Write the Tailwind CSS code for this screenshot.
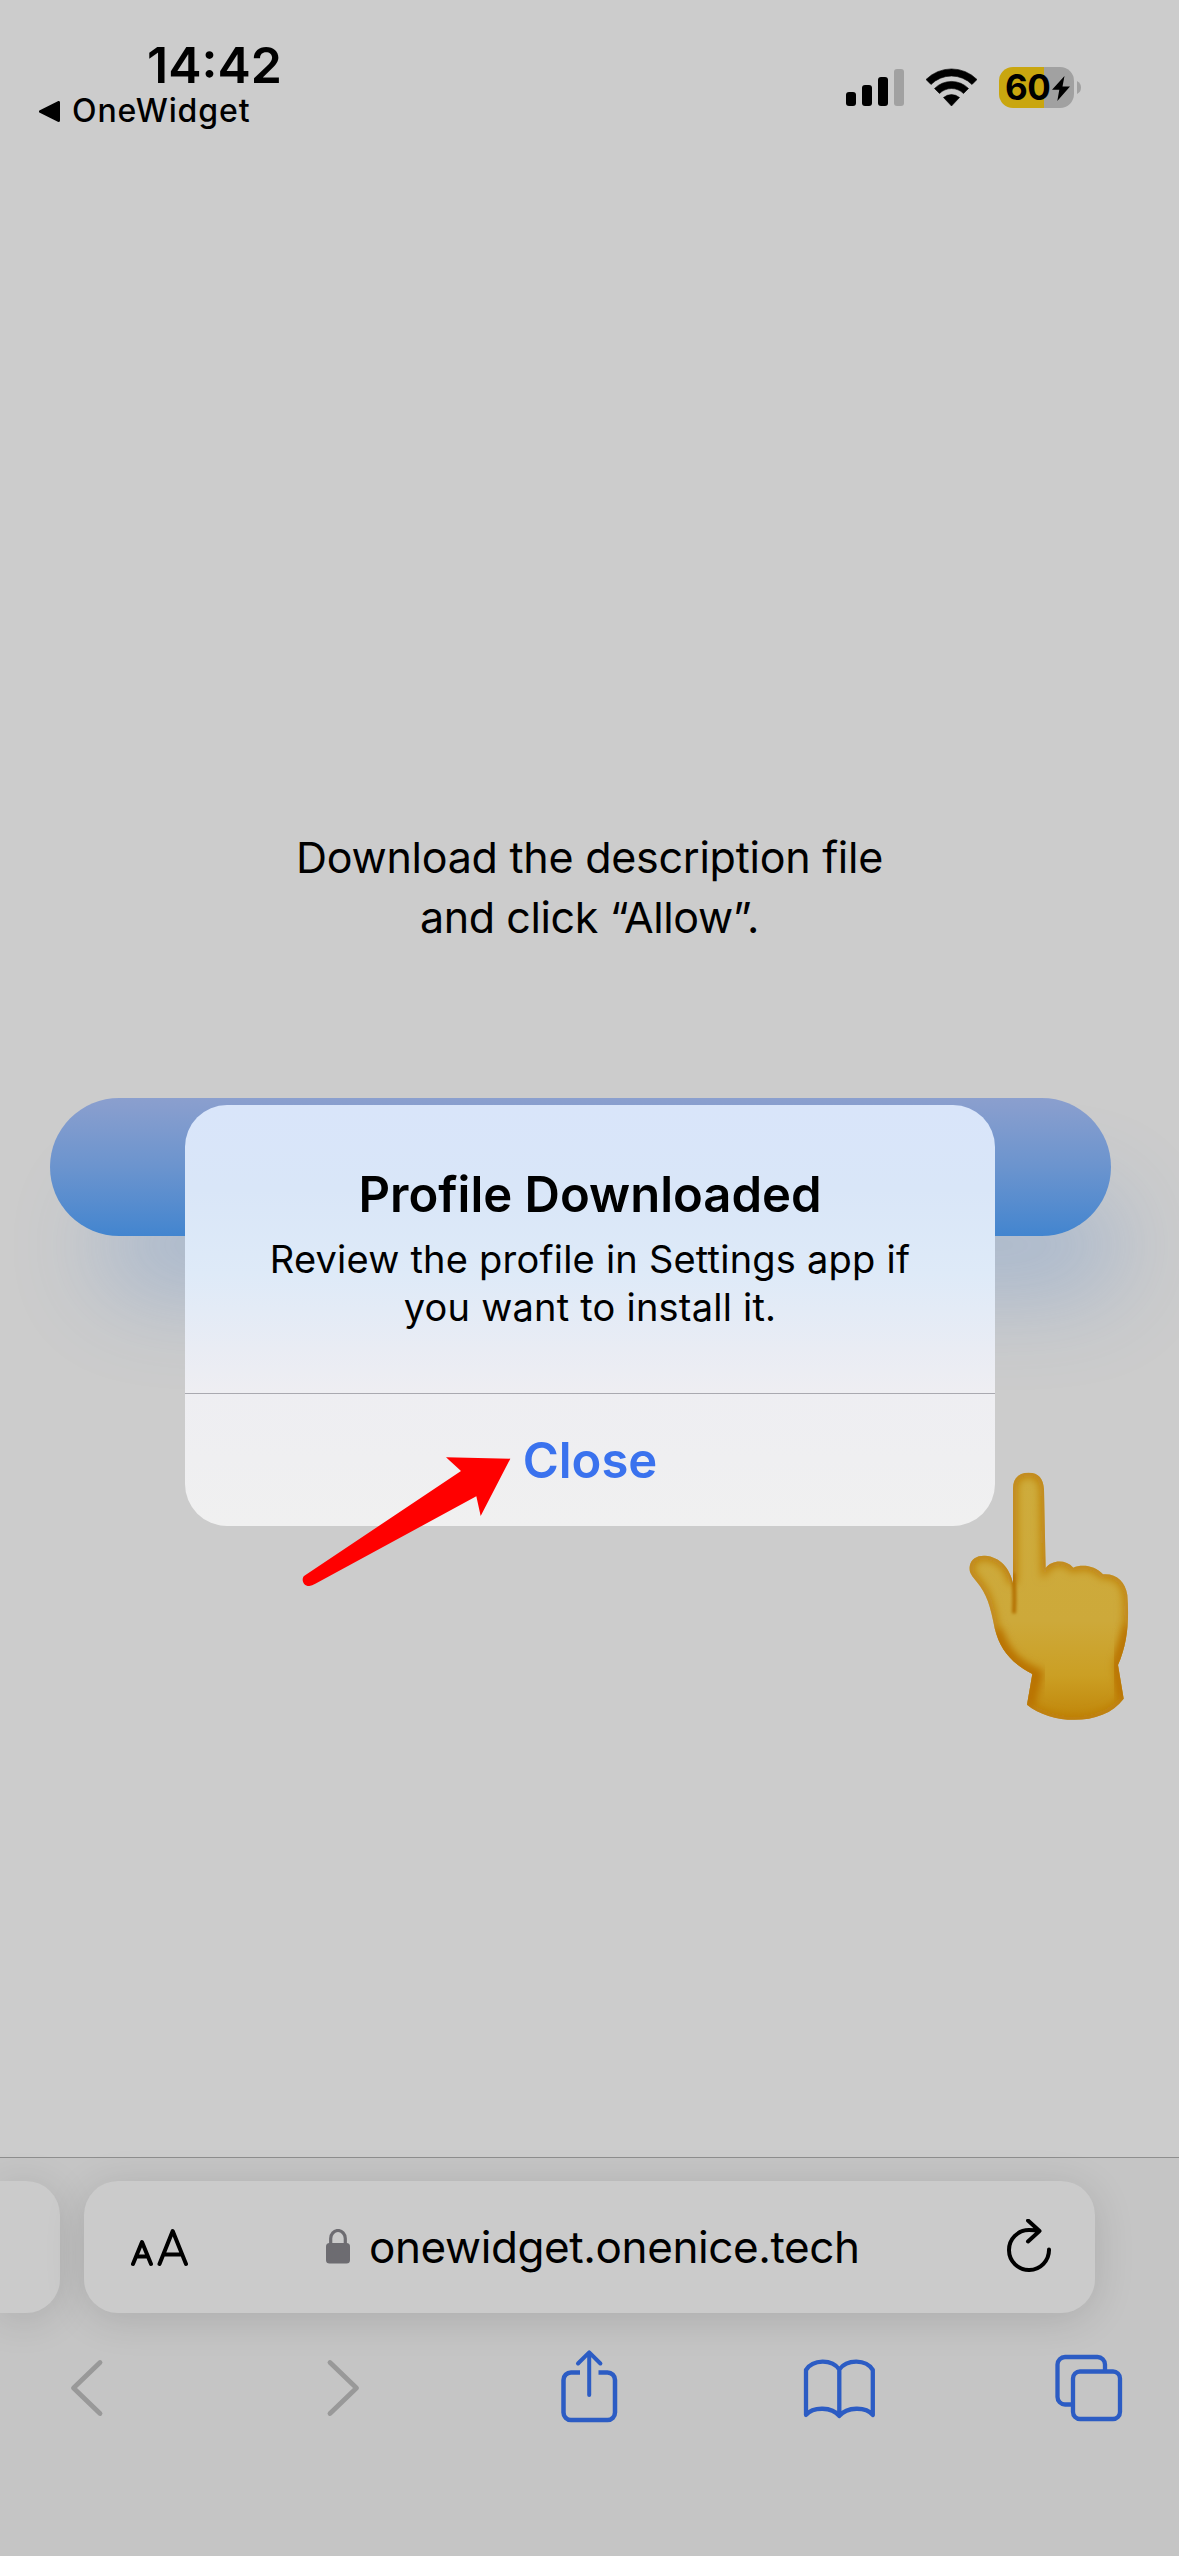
<!DOCTYPE html>
<html lang="en">
<head>
<meta charset="utf-8">
<title>Profile Downloaded</title>
<script src="https://cdn.jsdelivr.net/npm/@tailwindcss/browser@4"></script>
</head>
<body class="bg-[#cccccc] text-black font-['Inter',sans-serif]">
<div class="relative flex h-[2556px] w-[1179px] flex-col overflow-hidden">

  <!-- status bar -->
  <header class="flex h-[140px] items-start justify-between pl-[39px] pr-[98px]">
    <div class="flex flex-col pt-[35px]">
      <div class="pl-[108px] text-[50px] leading-[60px] font-semibold whitespace-nowrap">14:42</div>
      <div class="flex items-center gap-[12px] text-[32px] leading-[32px] font-medium tracking-[0.9px]">
        <svg class="h-[21px] w-[21px]" viewBox="0 0 21 21"><path d="M1.500 10.500 19.500 1.500v18z" fill="#000" stroke="#000" stroke-width="3" stroke-linejoin="round"/></svg>
        <span>OneWidget</span>
      </div>
    </div>
    <div class="flex items-center pt-[67px]">
      <svg class="h-[41px] w-[58px]" viewBox="0 0 58 41"><rect y="25" width="10" height="14" rx="3"/><rect x="16" y="18" width="10" height="21" rx="3"/><rect x="32" y="10" width="10" height="29" rx="3"/><rect x="48" y="2" width="10" height="37" rx="3" fill="#a1a1a1"/></svg>
      <svg class="ml-[22px] h-[41px] w-[51px]" viewBox="0 0 51 41"><path d="M0 12.5A36 36 0 0 1 51 12.500L46 17.500A29 29 0 0 0 5 17.500ZM8.500 21.500A24 24 0 0 1 42.500 21.500L37.500 26.500A17 17 0 0 0 13.500 26.500ZM17.500 30.500A12.500 12.500 0 0 1 33.500 30.500L25.500 39Z" stroke="#000" stroke-width=".6" stroke-linejoin="round"/></svg>
      <div class="relative ml-[22px] flex h-[41px] w-[75px] items-center overflow-hidden rounded-[14px] bg-[linear-gradient(to_right,#c9a60f_45px,#a1a1a1_45px)] pl-[6px]">
        <span class="text-[35px] leading-none font-bold tracking-[-0.5px]">60</span>
        <svg class="absolute left-[53px] top-[9px] h-[25px] w-[18px]" viewBox="0 0 18 25"><path d="M12.500 0 0 13.800h7.300L5.300 25 18 10.500H10.500Z"/></svg>
      </div>
      <svg class="ml-[3px] h-[13px] w-[4px]" viewBox="0 0 4 13"><path d="M0 0Q4 2 4 6.500T0 13Z" fill="#a1a1a1"/></svg>
    </div>
  </header>

  <!-- page content -->
  <main class="flex flex-1 flex-col items-center">
    <p class="mt-[687px] text-center text-[43px] leading-[60px] tracking-[-0.25px] whitespace-nowrap">Download the description file<br><span class="tracking-[-0.4px]">and click “Allow”.</span></p>
    <div class="mt-[151px] mr-[18px] h-[138px] w-[1061px] rounded-full bg-linear-to-b from-[#8b9fce] via-[#6b94ce] to-[#4285cf] shadow-[30px_78px_90px_-18px_rgba(70,130,210,0.27)]"></div>
  </main>

  <!-- browser toolbar -->
  <footer class="flex h-[399px] flex-col border-t border-[#8f8f8f] bg-[#c5c5c5] pt-[23px]">
    <div class="flex gap-[24px]">
      <div class="h-[132px] w-[60px] rounded-r-[34px] bg-[#cbcbcb] shadow-[0_6px_40px_rgba(0,0,0,0.13)]"></div>
      <div class="flex h-[132px] w-[1011px] items-center rounded-[34px] bg-[#cbcbcb] pl-[47px] pr-[42px] shadow-[0_6px_40px_rgba(0,0,0,0.13)]">
        <svg class="h-[42px] w-[58px] fill-none stroke-black" viewBox="0 0 58 42" stroke-width="4" stroke-linecap="round" stroke-linejoin="round"><path d="M2 38 11 16 20 38M5.500 30.500H16.500M28.500 38 41.700 5 55 38M33 28.500H50.500"/></svg>
        <div class="ml-[137px] flex items-center gap-[19px]">
          <svg class="h-[35px] w-[24px] -translate-y-px" viewBox="0 0 24 35"><rect y="14" width="24" height="20.500" rx="3.500" fill="#6d6c71"/><path d="M4.700 15V9.500a7.300 8 0 0 1 14.600 0V15" fill="none" stroke="#6d6c71" stroke-width="3.200"/></svg>
          <span class="text-[44px] leading-[60px] tracking-[-0.4px] whitespace-nowrap">onewidget.onenice.tech</span>
        </div>
        <svg class="ml-auto h-[56px] w-[46px] fill-none stroke-black" viewBox="0 0 46 56" stroke-width="4" stroke-linecap="round" stroke-linejoin="round"><path d="M42 30.500A20 20 0 1 1 22 11Q28 11 32 12M21 1.500 32.500 12 21 22.500"/></svg>
      </div>
    </div>
    <nav class="flex items-center pl-[68px] pt-[35px] fill-none stroke-[#2c5cc4] [&>svg]:h-[80px]">
      <svg class="w-[38px] stroke-[#999999]" viewBox="68 2348 38 80" stroke-width="4.800" stroke-linecap="round" stroke-linejoin="round"><path d="M100 2362.500 73.500 2388 100 2413.500"/></svg>
      <svg class="ml-[219px] w-[38px] stroke-[#999999]" viewBox="325 2348 38 80" stroke-width="4.800" stroke-linecap="round" stroke-linejoin="round"><path d="M330 2362.500 356.500 2388 330 2413.500"/></svg>
      <svg class="ml-[197px] w-[58px]" viewBox="560 2348 58 80" stroke-width="4.500" stroke-linejoin="round"><path d="M580 2372.500H571a7.500 7.500 0 0 0-7.500 7.500v32.500a7.500 7.500 0 0 0 7.500 7.500h36.500a7.500 7.500 0 0 0 7.500-7.500V2380a7.500 7.500 0 0 0-7.500-7.500h-9"/><path d="M589.200 2395V2353M578 2363.500 589.200 2352.300 600.400 2363.500" stroke-width="4" stroke-linecap="round"/></svg>
      <svg class="ml-[184px] w-[76px]" viewBox="802 2348 76 80" stroke-width="4.300" stroke-linecap="round" stroke-linejoin="round"><path d="M839.300 2369.500C832 2359 813 2359 806 2370V2415C813 2406.500 832 2406.500 839.300 2416C847 2406.500 866 2406.500 872.800 2415V2370C866 2359 847 2359 839.300 2369.500ZM839.300 2369.500V2416"/></svg>
      <svg class="ml-[176px] w-[70px]" viewBox="1054 2348 70 80" stroke-width="4.300"><rect x="1073" y="2371.500" width="47" height="47.500" rx="7"/><path d="M1105 2371V2364.500a7.500 7.500 0 0 0-7.500-7.500H1065a7.500 7.500 0 0 0-7.500 7.500V2397a7.500 7.500 0 0 0 7.500 7.500h8"/></svg>
    </nav>
  </footer>

  <!-- pointing hand -->
  <svg class="absolute left-[940px] top-[1440px] h-[310px] w-[220px]" viewBox="0 0 660 930">
    <defs>
      <linearGradient id="skin" x1="0" y1="0" x2="0" y2="1"><stop offset="0" stop-color="#ceac3c"/><stop offset=".6" stop-color="#cda93a"/><stop offset=".82" stop-color="#cb9f24"/><stop offset="1" stop-color="#c0860a"/></linearGradient>
      <path id="hand" d="M219 430V145C219 115 236 98 266 98S310 116 312 148L317 384C335 361 375 356 400 383C425 372 465 376 489 403C530 400 556 425 562 465C568 540 563 610 534 675L551 776C490 860 335 855 261 794L277 702C215 670 180 630 164 565C152 500 140 460 110 425C95 407 86 396 89 379C93 355 112 346 135 347C180 350 210 385 219 430Z"/>
      <clipPath id="hc"><use href="#hand"/></clipPath>
      <filter id="soft" x="-20%" y="-20%" width="140%" height="140%"><feGaussianBlur stdDeviation="12"/></filter>
      <filter id="soft2" x="-300%" y="-30%" width="700%" height="160%"><feGaussianBlur stdDeviation="5"/></filter>
    </defs>
    <use href="#hand" fill="url(#skin)"/>
    <g clip-path="url(#hc)">
      <use href="#hand" fill="none" stroke="#bd7d08" stroke-width="24" filter="url(#soft)"/>
      <path d="M165 570C190 650 240 690 290 705L262 800" fill="none" stroke="#b97206" stroke-width="38" filter="url(#soft)"/>
      <path d="M570 560 530 680 550 780" fill="none" stroke="#b97206" stroke-width="30" filter="url(#soft)"/>
      <path d="M219 400C223 430 224 480 222 520" fill="none" stroke="#b36f05" stroke-width="12" filter="url(#soft2)"/>
    </g>
  </svg>

  <!-- alert -->
  <section class="absolute left-[185px] top-[1105px] flex h-[421px] w-[810px] flex-col rounded-[42px] bg-[linear-gradient(to_bottom,#d9e5fa_0%,#d9e6f8_20%,#deeaf8_40%,#e9ecf4_58%,#eeeef2_68%,#f0f0f0_100%)] text-center">
    <div class="h-[289px] border-b border-[#a9a9b0] pt-[60px]">
      <h1 class="text-[49px] leading-[60px] font-semibold">Profile Downloaded</h1>
      <p class="mt-[10px] text-[38px] leading-[48px] tracking-[0.22px]">Review the profile in Settings app if<br>you want to install it.</p>
    </div>
    <button class="flex-1 pt-[1px] text-[49px] font-semibold text-[#3a72ee]">Close</button>
  </section>

  <!-- red arrow -->
  <svg class="absolute left-[290px] top-[1440px] h-[160px] w-[240px]" viewBox="0 0 720 480"><path d="M661 56 468 52 513 93 42 408C32 420 42 439 58 438Q66 437 76 431L559 169 572 228Z" fill="#f00"/></svg>
</div>
</body>
</html>
